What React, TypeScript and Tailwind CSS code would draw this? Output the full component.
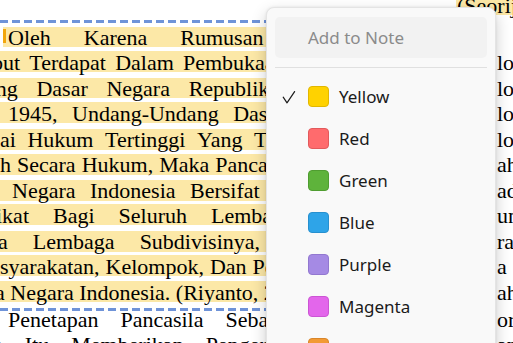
import React from 'react';

type Line = {
  words: string[];
  start: string;
  gap: string;
  right?: string;
  hl?: boolean;
  mark?: boolean;
};

const BAND =
  'bg-[linear-gradient(to_bottom,transparent_1.5px,#fce8a7_1.5px,#fce8a7_22.5px,transparent_22.5px)]';

const paragraph: Line[] = [
  { words: ['Oleh', 'Karena', 'Rumusan', 'Pancasila'], start: 'ml-[2.5px]', gap: 'gap-[33px]', hl: true, mark: true },
  { words: ['but', 'Terdapat', 'Dalam', 'Pembukaan'], start: 'ml-[-8px]', gap: 'gap-[9.2px]', right: 'lo', hl: true },
  { words: ['ang', 'Dasar', 'Negara', 'Republik'], start: 'ml-[-14px]', gap: 'gap-[18.7px]', right: 'lo', hl: true },
  { words: ['1945,', 'Undang-Undang', 'Dasar'], start: 'ml-[8px]', gap: 'gap-[14.5px]', right: 'lo', hl: true },
  { words: ['ai', 'Hukum', 'Tertinggi', 'Yang', 'Tidak'], start: 'ml-0', gap: 'gap-[11.6px]', right: 'lo', hl: true },
  { words: ['h', 'Secara', 'Hukum,', 'Maka', 'Pancasila'], start: 'ml-0', gap: 'gap-[6px]', right: 'ah', hl: true },
  { words: ['Negara', 'Indonesia', 'Bersifat'], start: 'ml-[12px]', gap: 'gap-[14.5px]', right: 'ada', hl: true },
  { words: ['ikat', 'Bagi', 'Seluruh', 'Lembaga'], start: 'ml-[-4px]', gap: 'gap-[24px]', right: 'una', hl: true },
  { words: ['a', 'Lembaga', 'Subdivisinya,'], start: 'ml-[-2px]', gap: 'gap-[25px]', right: 'rak', hl: true },
  { words: ['syarakatan,', 'Kelompok,', 'Dan', 'Perorangan'], start: 'ml-0', gap: 'gap-[6px]', right: 'a S', hl: true },
  { words: ['a', 'Negara', 'Indonesia.', '(Riyanto,', '2014)'], start: 'ml-[-5px]', gap: 'gap-[5.5px]', right: 'aha', hl: true },
];

const after: Line[] = [
  { words: ['Penetapan', 'Pancasila', 'Sebagai'], start: 'ml-[8px]', gap: 'gap-[22px]', right: 'ori' },
  { words: ['a', 'Itu', 'Memberikan', 'Pengertian'], start: 'ml-[-7px]', gap: 'gap-[22px]', right: 'an' },
];

const colors = [
  { name: 'Yellow', fill: 'bg-[#ffd200] border-[#e2b700]', checked: true },
  { name: 'Red', fill: 'bg-[#ff6b6d] border-[#e25a5c]' },
  { name: 'Green', fill: 'bg-[#5eb33b] border-[#4f9d30]' },
  { name: 'Blue', fill: 'bg-[#2ea4e8] border-[#2790cf]' },
  { name: 'Purple', fill: 'bg-[#a58ae4] border-[#9278d0]' },
  { name: 'Magenta', fill: 'bg-[#e366eb] border-[#cc55d4]' },
  { name: 'Orange', fill: 'bg-[#f29a34] border-[#d9862a]' },
];

function TextLine({ line }: { line: Line }) {
  return (
    <div className="flex h-[25.5px] shrink-0 whitespace-nowrap">
      <div className="w-[497px] shrink-0 overflow-hidden">
        <div className={`flex h-full w-[480px] items-start ${line.hl ? BAND : ''} ${line.mark ? 'ml-[3px]' : ''}`}>
          {line.mark && <span className="mt-[4.5px] h-[14px] w-[2.5px] shrink-0 bg-[#f2a60c]" />}
          <div className={`flex ${line.gap} ${line.start}`}>
            {line.words.map((w, i) => (
              <span key={i}>{w}</span>
            ))}
          </div>
        </div>
      </div>
      {line.right && <div>{line.right}</div>}
    </div>
  );
}

function Dashes({ className }: { className: string }) {
  return (
    <div
      className={`h-[3px] w-[480px] shrink-0 bg-[repeating-linear-gradient(to_right,#6f93d8_0_8px,transparent_8px_12px)] ${className}`}
    />
  );
}

function Check() {
  return (
    <svg width="14" height="14" viewBox="0 0 14 14" fill="none" className="ml-[7px]">
      <path d="M1.2 7.2 L5 12.8 L12.6 1.6" stroke="#1c1c1c" strokeWidth="1.2" strokeLinecap="round" strokeLinejoin="round" />
    </svg>
  );
}

function HighlightMenu() {
  return (
    <div className="absolute left-[266px] top-[7px] h-[370px] w-[230px] rounded-[8px] border border-[#e4e4e4] bg-[#f9f9f9] px-[8px] pt-[9px] font-['Segoe_UI','Noto_Sans',sans-serif] shadow-[0_6px_16px_rgba(0,0,0,0.2),0_0_3px_rgba(0,0,0,0.08)]">
      <div className="flex h-[41px] items-center rounded-[5px] bg-[#f2f2f2] pl-[33px] text-[17px] text-[#8b8b8b]">
        Add to Note
      </div>
      <div className="mt-[8.5px] h-px bg-[#e0e0e0]" />
      <div className="mt-[8px] flex flex-col">
        {colors.map((c) => (
          <div key={c.name} className="flex h-[42px] items-center text-[17px] text-[#1b1b1b]">
            <div className="flex w-[33px] items-center">{c.checked && <Check />}</div>
            <span className={`h-[21px] w-[21px] rounded-[4px] border ${c.fill}`} />
            <span className="ml-[10px]">{c.name}</span>
          </div>
        ))}
      </div>
    </div>
  );
}

export default function App() {
  return (
    <div className="relative h-[343px] w-[513px] overflow-hidden bg-white font-['Liberation_Serif','Times_New_Roman',serif] text-[22px] leading-[25.5px] text-black">
      <div className="mt-[-7px] flex flex-col">
        {/* tail of the previous line */}
        <div className="flex h-[25.5px] shrink-0 whitespace-nowrap pl-[456px]">
          <div className={`w-[80px] pl-[1px] ${BAND}`}>(Seorijanto</div>
        </div>
        <Dashes className="mt-[1.5px] mb-[1.8px]" />
        {paragraph.map((l, i) => (
          <TextLine key={i} line={l} />
        ))}
        <Dashes className="mt-[3px] mb-[-4.5px]" />
        {after.map((l, i) => (
          <TextLine key={i} line={l} />
        ))}
      </div>
      <HighlightMenu />
    </div>
  );
}
